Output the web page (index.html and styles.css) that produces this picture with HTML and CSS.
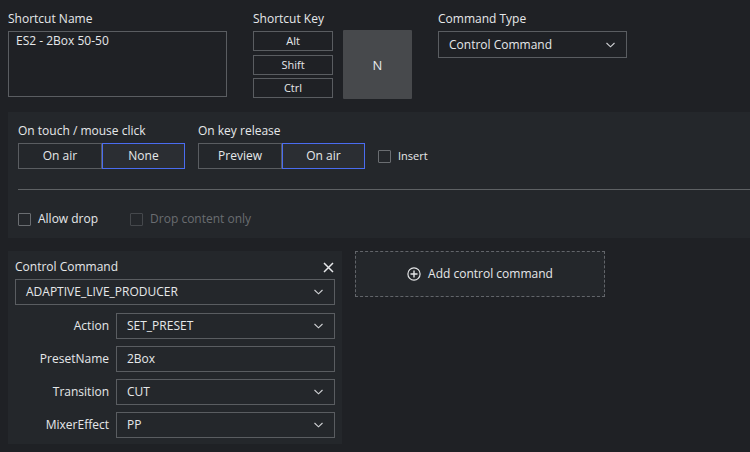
FILE: index.html
```html
<!DOCTYPE html>
<html>
<head>
<meta charset="utf-8">
<link rel="stylesheet" href="styles.css">
</head>
<body>
<div class="top">
  <div class="col name-col">
    <div class="label">Shortcut Name</div>
    <div class="textarea">ES2 - 2Box 50-50</div>
  </div>
  <div class="col key-col">
    <div class="label">Shortcut Key</div>
    <div class="key-row">
      <div class="mods">
        <div class="mod">Alt</div>
        <div class="mod">Shift</div>
        <div class="mod">Ctrl</div>
      </div>
      <div class="keybox">N</div>
    </div>
  </div>
  <div class="col type-col">
    <div class="label">Command Type</div>
    <div class="select type-select"><span>Control Command</span><svg class="chev" width="9" height="6" viewBox="0 0 9 6"><path d="M0.5 1 L4.5 4.8 L8.5 1" fill="none" stroke="#d0d2d5" stroke-width="1.1"/></svg></div>
  </div>
</div>

<div class="panel">
  <div class="modes">
    <div class="mode">
      <div class="label">On touch / mouse click</div>
      <div class="seg">
        <div class="seg-btn">On air</div>
        <div class="seg-btn active">None</div>
      </div>
    </div>
    <div class="mode">
      <div class="label">On key release</div>
      <div class="seg-line">
        <div class="seg">
          <div class="seg-btn">Preview</div>
          <div class="seg-btn active">On air</div>
        </div>
        <label class="check small"><span class="box"></span><span>Insert</span></label>
      </div>
    </div>
  </div>
  <div class="divider"></div>
  <div class="checks">
    <label class="check"><span class="box"></span><span>Allow drop</span></label>
    <label class="check disabled"><span class="box"></span><span>Drop content only</span></label>
  </div>
</div>

<div class="bottom">
  <div class="cmd">
    <div class="cmd-head"><span>Control Command</span><svg width="11" height="11" viewBox="0 0 11 11"><path d="M1 1 L10 10 M10 1 L1 10" stroke="#e6e8ea" stroke-width="1.5"/></svg></div>
    <div class="select"><span>ADAPTIVE_LIVE_PRODUCER</span><svg class="chev" width="9" height="6" viewBox="0 0 9 6"><path d="M0.5 1 L4.5 4.8 L8.5 1" fill="none" stroke="#d0d2d5" stroke-width="1.1"/></svg></div>
    <div class="row"><div class="rlabel">Action</div><div class="select"><span>SET_PRESET</span><svg class="chev" width="9" height="6" viewBox="0 0 9 6"><path d="M0.5 1 L4.5 4.8 L8.5 1" fill="none" stroke="#d0d2d5" stroke-width="1.1"/></svg></div></div>
    <div class="row"><div class="rlabel">PresetName</div><div class="select input"><span>2Box</span></div></div>
    <div class="row"><div class="rlabel">Transition</div><div class="select"><span>CUT</span><svg class="chev" width="9" height="6" viewBox="0 0 9 6"><path d="M0.5 1 L4.5 4.8 L8.5 1" fill="none" stroke="#d0d2d5" stroke-width="1.1"/></svg></div></div>
    <div class="row"><div class="rlabel">MixerEffect</div><div class="select"><span>PP</span><svg class="chev" width="9" height="6" viewBox="0 0 9 6"><path d="M0.5 1 L4.5 4.8 L8.5 1" fill="none" stroke="#d0d2d5" stroke-width="1.1"/></svg></div></div>
  </div>
  <div class="add">
    <svg width="14" height="14" viewBox="0 0 14 14"><circle cx="7" cy="7" r="6.1" fill="none" stroke="#e2e4e6" stroke-width="1.2"/><path d="M7 3.5 V10.5 M3.5 7 H10.5" stroke="#e2e4e6" stroke-width="1.4"/></svg>
    <span>Add control command</span>
  </div>
</div>
</body>
</html>
```

FILE: styles.css
```css
* { box-sizing: border-box; }
html, body { margin: 0; padding: 0; }
body {
  width: 750px;
  height: 452px;
  overflow: hidden;
  background: #1f2125;
  color: #e6e8ea;
  font-family: "Open Sans", "Noto Sans", "Liberation Sans", sans-serif;
  font-size: 12px;
  line-height: 16px;
}
.top {
  display: flex;
  padding: 10px 0 0 8px;
  height: 112px;
}
.label { height: 16px; margin-bottom: 5px; white-space: nowrap; }
.top .label { padding-top: 1px; }
.name-col { width: 219px; margin-right: 26px; }
.textarea {
  height: 66px;
  border: 1px solid #5a5d61;
  padding: 1px 7px;
}
.key-col { margin-right: 26px; }
.key-row { display: flex; gap: 10px; margin-top: -1px; }
.mods { display: flex; flex-direction: column; gap: 3.5px; padding-top: 1px; }
.mod {
  width: 80px;
  height: 20px;
  border: 1px solid #5a5d61;
  font-size: 11px;
  display: flex;
  align-items: center;
  justify-content: center;
}
.keybox {
  width: 69px;
  height: 69px;
  background: #47494c;
  border-radius: 1px;
  display: flex;
  align-items: center;
  justify-content: center;
  font-size: 13px;
}
.select {
  height: 27px;
  border: 1px solid #5a5d61;
  display: flex;
  align-items: center;
  justify-content: space-between;
  padding: 0 11px 0 10px;
  white-space: nowrap;
}
.type-select { width: 189px; }
.panel {
  margin-left: 8px;
  height: 126px;
  background: #24272b;
  padding: 11px 0 0 10px;
}
.modes { display: flex; gap: 13px; }
.modes .label { margin-bottom: 4px; }
.seg { display: flex; }
.seg-btn {
  width: 84px;
  height: 26px;
  border: 1px solid #5a5d61;
  display: flex;
  align-items: center;
  justify-content: center;
  font-size: 12px;
}
.seg-btn + .seg-btn { width: 83px; border-left: none; }
.seg-btn.active {
  border: 1px solid #4a6cf0;
  background: #2b2e33;
}
.seg-line { display: flex; align-items: center; gap: 13px; }
.check { display: flex; align-items: center; gap: 7px; white-space: nowrap; }
.check .box {
  width: 13px;
  height: 13px;
  border: 1px solid #6a6d71;
  border-radius: 1px;
}
.check.small { font-size: 11px; }
.check.disabled { color: #6a6d71; }
.check.disabled .box { border-color: #45484c; }
.divider {
  height: 1px;
  background: #5e6164;
  margin-top: 20px;
}
.checks { display: flex; gap: 32px; margin-top: 21px; }
.bottom {
  display: flex;
  align-items: flex-start;
  gap: 13px;
  padding: 13px 0 0 8px;
}
.cmd {
  width: 334px;
  height: 193px;
  background: #24272b;
  padding: 8px 7px 0 7px;
  display: flex;
  flex-direction: column;
  gap: 7.3px;
}
.cmd-head {
  display: flex;
  justify-content: space-between;
  align-items: center;
  height: 14px;
  margin-top: 1px;
  margin-bottom: -2px;
  padding-right: 1px;
}
.cmd .select { height: 26px; }
.row { display: flex; gap: 7px; }
.row .select { flex: 1; }
.rlabel {
  width: 94px;
  text-align: right;
  display: flex;
  align-items: center;
  justify-content: flex-end;
}
.add {
  width: 250px;
  height: 46px;
  border: 1px dashed #62656a;
  background: #24272b;
  display: flex;
  align-items: center;
  justify-content: center;
  gap: 7px;
  font-size: 12px;
}
```
